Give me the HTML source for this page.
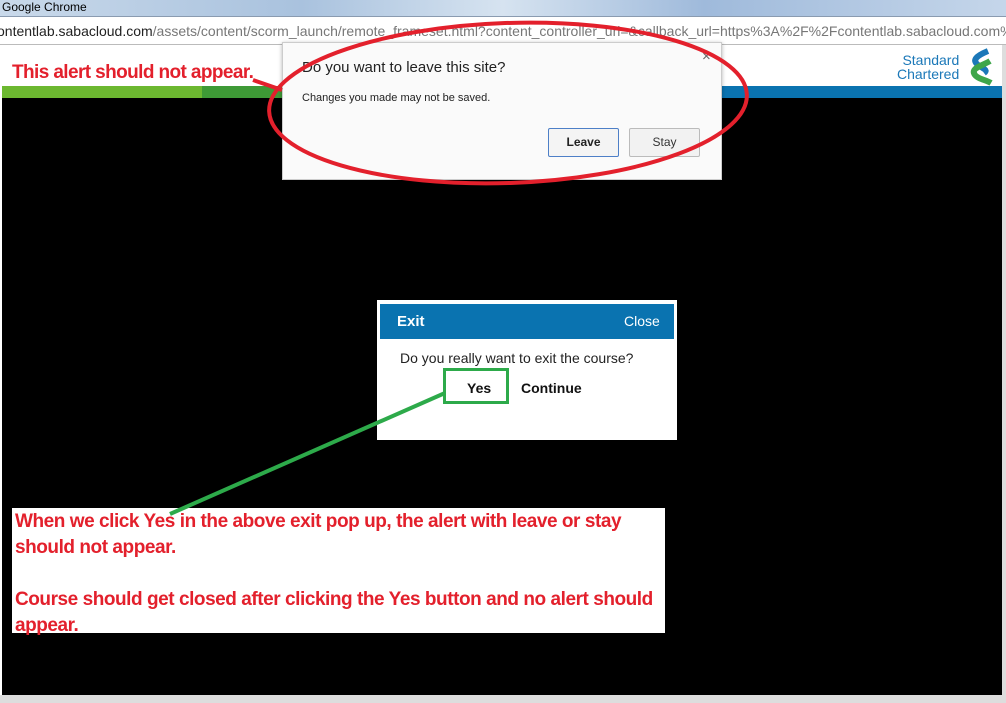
<!DOCTYPE html>
<html><head><style>
body{margin:0;width:1006px;height:703px;overflow:hidden;position:relative;background:#fff;font-family:"Liberation Sans",sans-serif}
.a{position:absolute}
</style></head><body>
<div class="a" style="left:0;top:0;width:1006px;height:16px;background:linear-gradient(90deg,#c9d9ea,#a9c2de 30%,#d6e3f0 50%,#9fbadb 70%,#c5d6ea);"></div>
<div class="a" style="left:2px;top:0;font-size:12px;color:#000;line-height:15px">Google Chrome</div>
<div class="a" style="left:0;top:16px;width:1006px;height:1px;background:#8a9bb0"></div>
<div class="a" style="left:0;top:17px;width:1006px;height:27px;background:#fff;border-bottom:1px solid #bbb"></div>
<div class="a" style="left:-3px;top:22px;font-size:14px;color:#777;white-space:nowrap;line-height:18px"><span style="color:#222">ontentlab.sabacloud.com</span>/assets/content/scorm_launch/remote_frameset.html?content_controller_url=&amp;callback_url=https%3A%2F%2Fcontentlab.sabacloud.com%</div>
<div class="a" style="left:1002px;top:45px;width:4px;height:658px;background:#ddd"></div>
<div class="a" style="left:0;top:695px;width:1006px;height:8px;background:#ddd"></div>
<div class="a" style="left:2px;top:86px;width:200px;height:12px;background:#6cb830"></div>
<div class="a" style="left:202px;top:86px;width:80px;height:12px;background:#3e9a36"></div>
<div class="a" style="left:282px;top:86px;width:720px;height:12px;background:#0a73b0"></div>
<div class="a" style="left:2px;top:98px;width:1000px;height:597px;background:#000"></div>
<div class="a" style="left:897px;top:53px;font-size:14px;color:#1b78b8;line-height:14px;text-align:right">Standard<br>Chartered</div>
<svg class="a" style="left:966px;top:48px" width="28" height="38"><path d="M22 3 C10 8,6 12,12 17 C18 21,22 22,18 25" stroke="#1b78b8" stroke-width="6" fill="none"/><path d="M24 13 C16 18,4 20,9 27 C12 31,20 32,25 35" stroke="#3ea64a" stroke-width="6" fill="none"/></svg>
<div class="a" style="left:12px;top:62px;font:bold 19px 'Liberation Sans',sans-serif;letter-spacing:-0.6px;color:#e3202c">This alert should not appear.</div>
<div class="a" style="left:282px;top:42px;width:438px;height:136px;background:#fafafa;border:1px solid #ccc;box-shadow:0 1px 4px rgba(0,0,0,.3)"></div>
<div class="a" style="left:302px;top:59px;font-size:15px;color:#222">Do you want to leave this site?</div>
<div class="a" style="left:302px;top:92px;font-size:11px;color:#222">Changes you made may not be saved.</div>
<div class="a" style="left:702px;top:48px;font-size:15px;color:#666">×</div>
<div class="a" style="left:548px;top:128px;width:69px;height:27px;border:1px solid #4d7fc7;background:#f4f4f4;font:bold 12px 'Liberation Sans';line-height:27px;text-align:center;color:#222;border-radius:2px">Leave</div>
<div class="a" style="left:629px;top:128px;width:69px;height:27px;border:1px solid #bbb;background:#f2f2f2;font:12px 'Liberation Sans';line-height:27px;text-align:center;color:#333;border-radius:2px">Stay</div>
<div class="a" style="left:377px;top:300px;width:300px;height:140px;background:#fff"></div>
<div class="a" style="left:380px;top:304px;width:294px;height:35px;background:#0a73b0"></div>
<div class="a" style="left:397px;top:313px;font:bold 15px 'Liberation Sans';color:#fff">Exit</div>
<div class="a" style="left:624px;top:313px;font:14px 'Liberation Sans';color:#fff">Close</div>
<div class="a" style="left:400px;top:350px;font:14px 'Liberation Sans';color:#222">Do you really want to exit the course?</div>
<div class="a" style="left:467px;top:380px;font:bold 14px 'Liberation Sans';color:#111">Yes</div>
<div class="a" style="left:521px;top:380px;font:bold 14px 'Liberation Sans';color:#111">Continue</div>
<div class="a" style="left:443px;top:368px;width:60px;height:30px;border:3px solid #2daa4a"></div>
<div class="a" style="left:12px;top:508px;width:653px;height:125px;background:#fff"></div>
<div class="a" style="left:15px;top:509px;width:660px;font:bold 19px/26px 'Liberation Sans',sans-serif;letter-spacing:-0.45px;color:#e3202c">When we click Yes in the above exit pop up, the alert with leave or stay should not appear.<br><br>Course should get closed after clicking the Yes button and no alert should appear.</div>
<svg class="a" style="left:0;top:0" width="1006" height="703">
<ellipse cx="508" cy="103" rx="239" ry="80" transform="rotate(-2 508 103)" stroke="#e3202c" stroke-width="4" fill="none"/>
<path d="M253 80 L282 90" stroke="#e3202c" stroke-width="4"/>
<path d="M170 514 L445 393" stroke="#2daa4a" stroke-width="4"/>
</svg>
</body></html>
